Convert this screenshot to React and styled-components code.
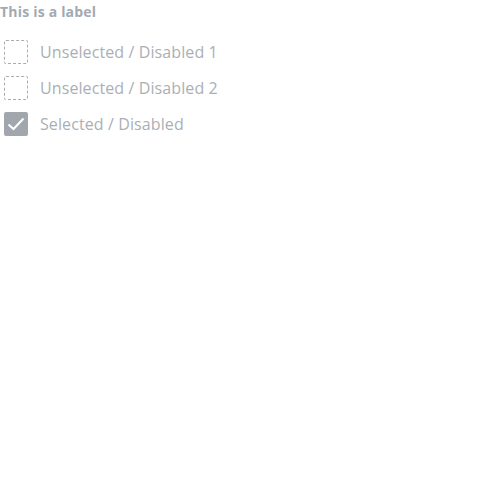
import React from "react";
import styled, { createGlobalStyle } from "styled-components";

const GlobalStyle = createGlobalStyle`
  body {
    margin: 0;
    background: #ffffff;
    font-family: "Open Sans", "Liberation Sans", sans-serif;
  }
`;

const Group = styled.fieldset`
  border: 0;
  margin: 0;
  padding: 0;
  display: flex;
  flex-direction: column;
`;

const Label = styled.legend`
  padding: 0;
  font-size: 14px;
  font-weight: 700;
  letter-spacing: 0.2px;
  line-height: 24px;
  color: #a3a9b2;
  margin-bottom: 10px;
`;

const Row = styled.label`
  display: flex;
  align-items: center;
  gap: 12px;
  height: 36px;
  padding-left: 4px;
  cursor: not-allowed;
`;

const Box = styled.span`
  box-sizing: border-box;
  width: 24px;
  height: 24px;
  border-radius: 2px;
  display: flex;
  align-items: center;
  justify-content: center;
  border: ${(p) => (p.$checked ? "none" : "1px dashed #a9adb3")};
  background: ${(p) => (p.$checked ? "#a2a6ad" : "transparent")};
`;

const Text = styled.span`
  font-size: 16px;
  letter-spacing: 0.1px;
  color: #abafb5;
`;

const items = [
  { id: 1, text: "Unselected / Disabled 1", checked: false },
  { id: 2, text: "Unselected / Disabled 2", checked: false },
  { id: 3, text: "Selected / Disabled", checked: true },
];

const App = () => (
  <>
    <GlobalStyle />
    <Group disabled>
      <Label>This is a label</Label>
      {items.map((item) => (
        <Row key={item.id}>
          <Box $checked={item.checked}>
            {item.checked && (
              <svg width="18" height="14" viewBox="0 0 18 14">
                <path
                  d="M1.5 7.5 L6.5 12 L16.5 1.5"
                  fill="none"
                  stroke="#ffffff"
                  strokeWidth="2"
                />
              </svg>
            )}
          </Box>
          <Text>{item.text}</Text>
        </Row>
      ))}
    </Group>
  </>
);

export default App;
